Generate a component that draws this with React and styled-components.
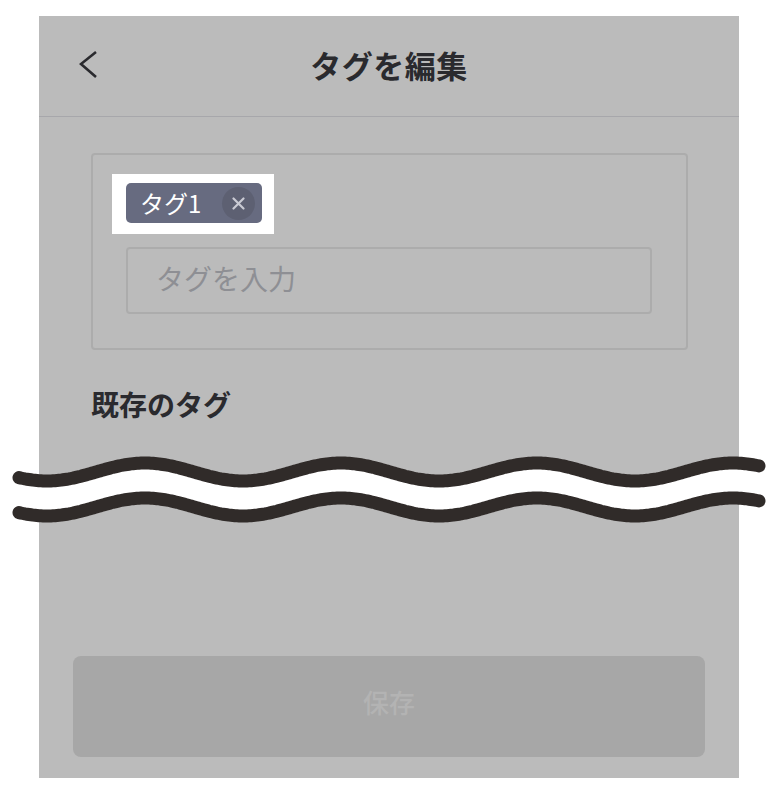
import React from "react";
import styled, { createGlobalStyle } from "styled-components";

const Global = createGlobalStyle`
  html, body { margin: 0; padding: 0; background: #ffffff; }
  body { font-family: "Noto Sans CJK JP", "Noto Sans", sans-serif; }
  * { box-sizing: border-box; }
`;

const Page = styled.div`
  width: 778px;
  height: 796px;
  padding: 16px 39px 18px 39px;
  background: #ffffff;
`;

const Panel = styled.div`
  width: 700px;
  height: 762px;
  background: #bbbbbb;
  display: flex;
  flex-direction: column;
`;

const Header = styled.header`
  height: 101px;
  border-bottom: 1.5px solid #a7a7ab;
  display: grid;
  grid-template-columns: 1fr auto 1fr;
  align-items: center;
  padding: 0 40px 2px 40px;
`;

const BackButton = styled.button`
  justify-self: start;
  width: 20px;
  height: 32px;
  padding: 0;
  border: 0;
  background: none;
  display: flex;
  align-items: center;
  justify-content: center;
  color: #2a2a2e;
`;

const Title = styled.h1`
  margin: 0;
  font-size: 31px;
  font-weight: 700;
  color: #2a2a2e;
  line-height: 40px;
  letter-spacing: 0.5px;
`;

const Body = styled.div`
  padding: 36px 51px 0 52px;
  display: flex;
  flex-direction: column;
`;

const TagBox = styled.div`
  border: 2px solid #acacac;
  border-radius: 4px;
  padding: 28px 34px 34px 33px;
  display: flex;
  flex-direction: column;
  align-items: flex-start;
  gap: 24px;
`;

const Highlight = styled.div`
  background: #ffffff;
  margin: -9px -12px -11px -14px;
  padding: 9px 12px 11px 14px;
  display: inline-flex;
`;

const Chip = styled.div`
  height: 40px;
  display: inline-flex;
  align-items: center;
  gap: 21px;
  padding: 0 7px 0 14px;
  background: #676b80;
  border-radius: 5px;
  color: #ffffff;
  font-size: 24px;
  line-height: 1;
`;

const ChipRemove = styled.span`
  width: 33px;
  height: 33px;
  border-radius: 50%;
  background: #5d6072;
  display: flex;
  align-items: center;
  justify-content: center;
`;

const TagInput = styled.input`
  width: 100%;
  height: 67px;
  border: 2px solid #acacac;
  border-radius: 4px;
  background: transparent;
  padding: 0 0 5px 28px;
  font-family: "Noto Sans CJK JP", "Noto Sans", sans-serif;
  font-size: 28px;
  color: #333;
  outline: none;
  &::placeholder { color: #8e8f94; }
`;

const SectionTitle = styled.h2`
  margin: 34px 0 0 0;
  font-size: 28px;
  font-weight: 700;
  line-height: 40px;
  color: #2a2a2e;
`;

const Cut = styled.svg`
  display: block;
  width: 778px;
  height: 80px;
  margin: 22px 0 0 -39px;
  overflow: visible;
`;

const SaveButton = styled.button`
  margin: auto 34px 21px 34px;
  height: 101px;
  border: 0;
  border-radius: 8px;
  background: #a7a7a7;
  color: #b3b3b3;
  font-family: "Noto Sans CJK JP", "Noto Sans", sans-serif;
  font-size: 26px;
  font-weight: 500;
  padding: 0 0 10px 0;
`;

function wavePoints(center, x0, x1) {
  const pts = [];
  const period = 196;
  const peak = 145;
  const amp = 9;
  for (let x = x0; x <= x1; x += 2) {
    const y = center - amp * Math.cos((2 * Math.PI * (x - peak)) / period);
    pts.push([x, y]);
  }
  return pts;
}

function WaveCut() {
  const x0 = 19;
  const x1 = 759;
  const top = wavePoints(26, x0, x1);
  const bottom = wavePoints(61, x0, x1);
  const toPath = (pts) =>
    pts.map((p, i) => `${i ? "L" : "M"}${p[0].toFixed(1)} ${p[1].toFixed(1)}`).join(" ");
  const band =
    toPath(top) +
    " " +
    bottom
      .slice()
      .reverse()
      .map((p) => `L${p[0].toFixed(1)} ${p[1].toFixed(1)}`)
      .join(" ") +
    " Z";
  return (
    <Cut viewBox="0 0 778 80">
      <path d={band} fill="#ffffff" />
      <path d={toPath(top)} fill="none" stroke="#302b29" strokeWidth="13" strokeLinecap="round" strokeLinejoin="round" />
      <path d={toPath(bottom)} fill="none" stroke="#302b29" strokeWidth="13" strokeLinecap="round" strokeLinejoin="round" />
    </Cut>
  );
}

export default function App() {
  return (
    <>
      <Global />
      <Page>
        <Panel>
          <Header>
            <BackButton aria-label="戻る">
              <svg width="20" height="32" viewBox="0 0 20 32">
                <polyline points="17,3 2,15 17,28" fill="none" stroke="currentColor" strokeWidth="2.6" />
              </svg>
            </BackButton>
            <Title>タグを編集</Title>
            <span />
          </Header>
          <Body>
            <TagBox>
              <Highlight>
                <Chip>
                  タグ1
                  <ChipRemove>
                    <svg width="13" height="13" viewBox="0 0 13 13">
                      <path d="M1.5 1.5 L11.5 11.5 M11.5 1.5 L1.5 11.5" stroke="#c9cad3" strokeWidth="2.2" strokeLinecap="round" />
                    </svg>
                  </ChipRemove>
                </Chip>
              </Highlight>
              <TagInput placeholder="タグを入力" />
            </TagBox>
            <SectionTitle>既存のタグ</SectionTitle>
          </Body>
          <WaveCut />
          <SaveButton disabled>保存</SaveButton>
        </Panel>
      </Page>
    </>
  );
}
